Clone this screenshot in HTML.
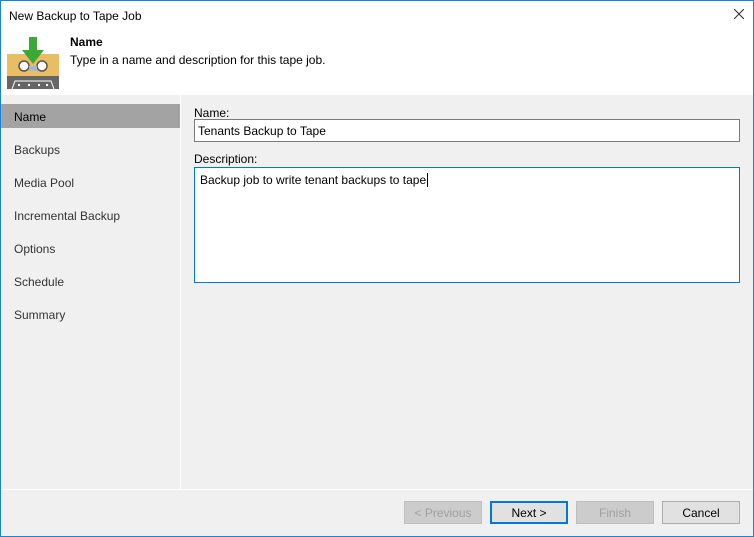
<!DOCTYPE html>
<html><head><style>
*{margin:0;padding:0;box-sizing:border-box}
body{width:754px;height:537px;position:relative;background:#f0f0f0;font-family:"Liberation Sans",sans-serif;font-size:12px;color:#000;overflow:hidden}
.a{position:absolute}
.nav{left:14px;color:#333;font-size:12px}
.btn{position:absolute;top:501px;height:23px;width:78px;border:1px solid #adadad;background:#e1e1e1;text-align:center;line-height:23px;font-size:12px}
</style></head><body>
<div class="a" style="left:0;top:0;width:754px;height:95px;background:#fff"></div>
<div class="a" style="left:9px;top:9px;font-size:12px">New Backup to Tape Job</div>
<svg class="a" style="left:734px;top:9px" width="10" height="10" viewBox="0 0 10 10"><path d="M0 0L10 10M10 0L0 10" stroke="#333" stroke-width="1.1"/></svg>
<svg class="a" style="left:6px;top:36px" width="54" height="54" viewBox="0 0 54 54">
<rect x="1" y="18" width="52" height="22" fill="#e9bd64"/>
<path d="M1 40 H53 V53 H1 Z" fill="#666"/>
<path d="M6 53 L9 45 H45 L48 53" fill="none" stroke="#fff" stroke-width="1"/>
<rect x="12" y="48" width="2" height="2" fill="#fff"/><rect x="22" y="48" width="2" height="2" fill="#fff"/><rect x="32" y="48" width="2" height="2" fill="#fff"/><rect x="40" y="48" width="2" height="2" fill="#fff"/>
<circle cx="18" cy="30" r="5" fill="#fff" stroke="#555" stroke-width="1.5"/>
<circle cx="36" cy="30" r="5" fill="#fff" stroke="#555" stroke-width="1.5"/>
<path d="M23 30 H31 V35 H23Z" fill="#a0b8d0"/>
<path d="M23 1 H31 V14 H38 L27 28 L16 14 H23Z" fill="#3aa935"/>
</svg>
<div class="a" style="left:70px;top:35px;font-weight:bold">Name</div>
<div class="a" style="left:70px;top:53px">Type in a name and description for this tape job.</div>
<div class="a" style="left:180px;top:95px;width:1px;height:394px;background:#fff"></div>
<div class="a" style="left:0;top:489px;width:754px;height:1px;background:#fff"></div>
<div class="a" style="left:1px;top:104px;width:179px;height:24px;background:#a3a3a3"></div>
<div class="a nav" style="top:110px;color:#000">Name</div>
<div class="a nav" style="top:143px">Backups</div>
<div class="a nav" style="top:176px">Media Pool</div>
<div class="a nav" style="top:209px">Incremental Backup</div>
<div class="a nav" style="top:242px">Options</div>
<div class="a nav" style="top:275px">Schedule</div>
<div class="a nav" style="top:308px">Summary</div>
<div class="a" style="left:194px;top:106px">Name:</div>
<div class="a" style="left:194px;top:119px;width:546px;height:23px;background:#fff;border:1px solid #7a7a7a;padding:4px 3px">Tenants Backup to Tape</div>
<div class="a" style="left:194px;top:152px">Description:</div>
<div class="a" style="left:194px;top:167px;width:546px;height:116px;background:#fff;border:1px solid #0078d7;padding:5px 5px">Backup job to write tenant backups to tape<span style="border-left:1px solid #000;margin-left:1px"></span></div>
<div class="btn" style="left:404px;width:78px;color:#a0a0a0;background:#ccc;border-color:#bfbfbf">&lt; Previous</div>
<div class="btn" style="left:490px;border:2px solid #0078d7;line-height:21px">Next &gt;</div>
<div class="btn" style="left:576px;color:#a0a0a0;background:#ccc;border-color:#bfbfbf">Finish</div>
<div class="btn" style="left:662px">Cancel</div>
<div class="a" style="left:0;top:0;width:754px;height:537px;border:1px solid #1883d7"></div>
</body></html>
